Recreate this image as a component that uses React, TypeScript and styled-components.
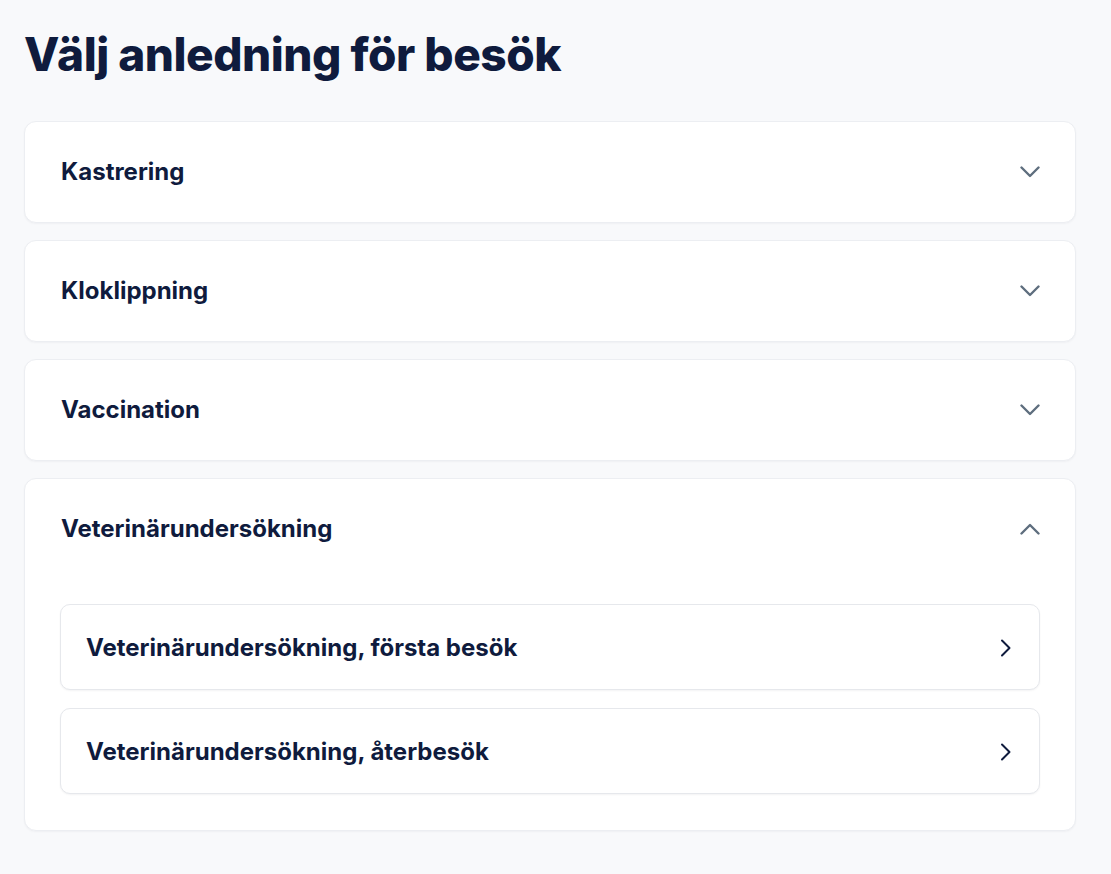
import React, { useState } from "react";
import styled, { createGlobalStyle } from "styled-components";

const GlobalStyle = createGlobalStyle`
  html, body { margin: 0; padding: 0; background: #f8f9fb; }
  body { font-family: Inter, "Noto Sans", sans-serif; color: #0f1b3d; }
  * { box-sizing: border-box; }
`;

const Page = styled.main`
  padding: 24px 35px 40px 24px;
  display: flex;
  flex-direction: column;
`;

const Title = styled.h1`
  margin: 0 0 37px 0;
  font-family: Inter, sans-serif;
  font-size: 46px;
  line-height: 60px;
  font-weight: 800;
  letter-spacing: -0.5px;
  color: #0f1b3d;
`;

const List = styled.div`
  display: flex;
  flex-direction: column;
  gap: 17px;
`;

const Card = styled.section`
  background: #fff;
  border: 1px solid #eceef2;
  border-radius: 12px;
  box-shadow: 0 1px 2px rgba(16, 24, 40, 0.04);
`;

const Header = styled.button`
  width: 100%;
  display: flex;
  align-items: center;
  justify-content: space-between;
  padding: 35px 35px 35px 36px;
  background: none;
  border: 0;
  cursor: pointer;
  font-family: Inter, sans-serif;
  font-size: 24px;
  line-height: 30px;
  font-weight: 700;
  color: #0f1b3d;
  text-align: left;
`;

const Body = styled.div`
  display: flex;
  flex-direction: column;
  gap: 18px;
  padding: 25px 35px 36px 35px;
`;

const Option = styled.button`
  width: 100%;
  display: flex;
  align-items: center;
  justify-content: space-between;
  padding: 28px 27px 26px 25px;
  background: #fff;
  border: 1px solid #e6e8ec;
  border-radius: 10px;
  box-shadow: 0 1px 2px rgba(16, 24, 40, 0.05);
  cursor: pointer;
  font-family: Inter, sans-serif;
  font-size: 24px;
  line-height: 30px;
  font-weight: 700;
  color: #0f1b3d;
  text-align: left;
`;

const Chevron = ({ up }: { up?: boolean }) => (
  <svg width="20" height="12" viewBox="0 0 20 12" fill="none">
    <path
      d={up ? "M1.5 10.5 L10 2 L18.5 10.5" : "M1.5 1.5 L10 10 L18.5 1.5"}
      stroke="#5e6e7e"
      strokeWidth="2.4"
      strokeLinecap="round"
      strokeLinejoin="round"
    />
  </svg>
);

const ChevronRight = () => (
  <svg width="12" height="18" viewBox="0 0 12 18" fill="none">
    <path d="M2 1.5 L9.5 9 L2 16.5" stroke="#0f1b3d" strokeWidth="2" strokeLinecap="round" strokeLinejoin="round" />
  </svg>
);

const categories = [
  { name: "Kastrering", options: [] as string[] },
  { name: "Kloklippning", options: [] as string[] },
  { name: "Vaccination", options: [] as string[] },
  {
    name: "Veterinärundersökning",
    options: ["Veterinärundersökning, första besök", "Veterinärundersökning, återbesök"],
  },
];

export default function App() {
  const [open, setOpen] = useState<string | null>("Veterinärundersökning");
  return (
    <>
      <GlobalStyle />
      <Page>
        <Title>Välj anledning för besök</Title>
        <List>
          {categories.map((c) => {
            const isOpen = open === c.name;
            return (
              <Card key={c.name}>
                <Header onClick={() => setOpen(isOpen ? null : c.name)}>
                  <span>{c.name}</span>
                  <Chevron up={isOpen} />
                </Header>
                {isOpen && (
                  <Body>
                    {c.options.map((o) => (
                      <Option key={o}>
                        <span>{o}</span>
                        <ChevronRight />
                      </Option>
                    ))}
                  </Body>
                )}
              </Card>
            );
          })}
        </List>
      </Page>
    </>
  );
}
